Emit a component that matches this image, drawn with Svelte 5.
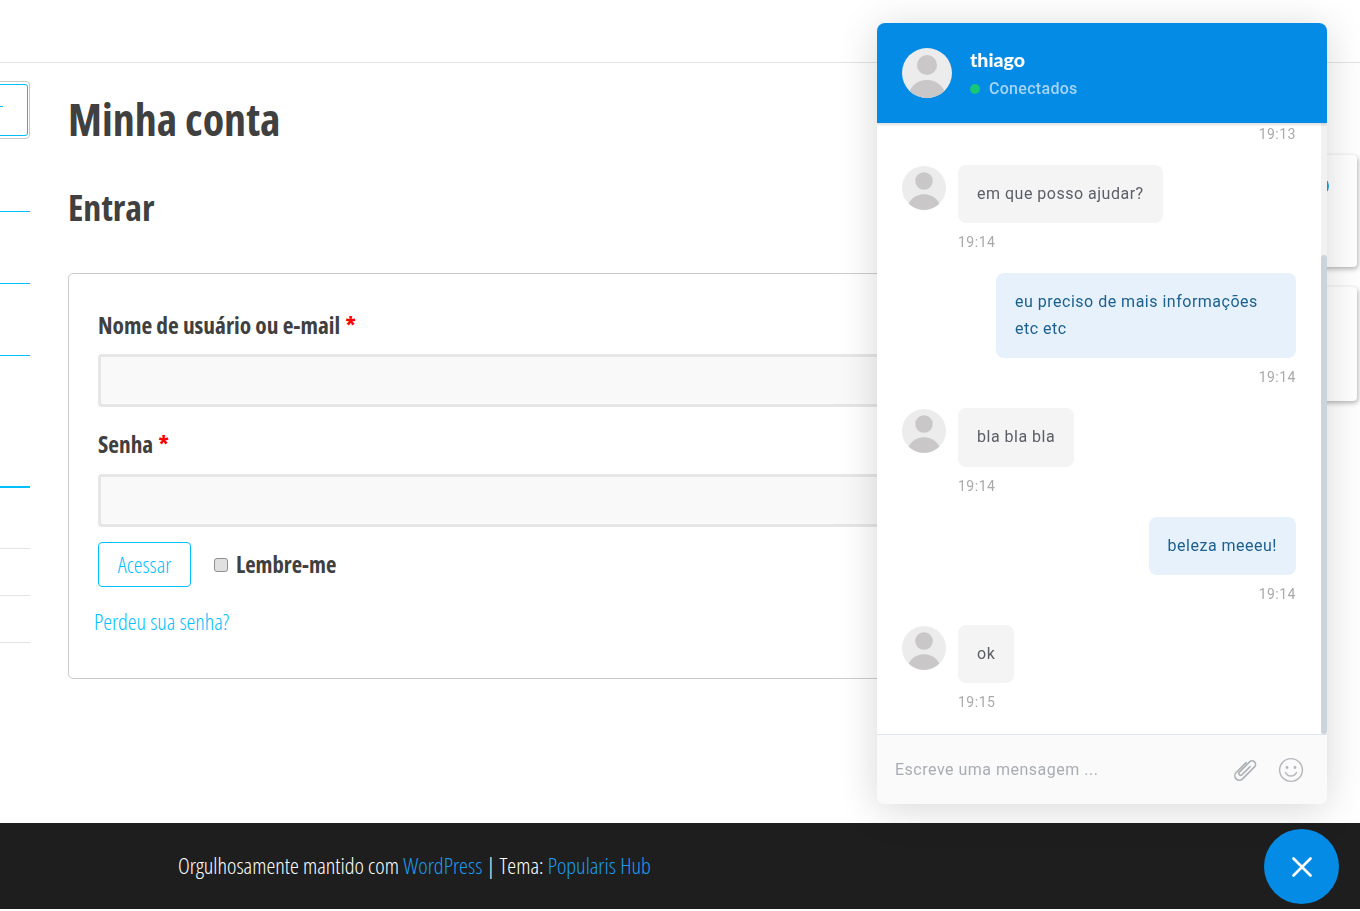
<script>
  const messages = [
    { side: 'in', text: 'em que posso ajudar?', time: '19:14' },
    { side: 'out', text: 'eu preciso de mais informações etc etc', time: '19:14' },
    { side: 'in', text: 'bla bla bla', time: '19:14' },
    { side: 'out', text: 'beleza meeeu!', time: '19:14' },
    { side: 'in', text: 'ok', time: '19:15' }
  ];
</script>

{#snippet avatar(size)}
  <svg class="avatar" width={size} height={size} viewBox="0 0 50 50" aria-hidden="true">
    <defs>
      <clipPath id="round-{size}"><circle cx="25" cy="25" r="25" /></clipPath>
    </defs>
    <g clip-path="url(#round-{size})">
      <rect width="50" height="50" fill="#ececec" />
      <circle cx="25" cy="17" r="10" fill="#c9c7c7" />
      <ellipse cx="25" cy="50" rx="19" ry="18" fill="#c9c7c7" />
    </g>
  </svg>
{/snippet}

<div class="page">
  <header class="topbar"></header>

  <div class="content">
    <aside class="sidebar">
      <div class="search"><div class="search-inner"><span class="tick"></span></div></div>
      <div class="rule blue" style="margin-top:72px"></div>
      <div class="rule blue" style="margin-top:71px"></div>
      <div class="rule blue" style="margin-top:71px"></div>
      <div class="rule blue thick" style="margin-top:130px"></div>
      <div class="rule grey" style="margin-top:60px"></div>
      <div class="rule grey" style="margin-top:46px"></div>
      <div class="rule grey" style="margin-top:46px"></div>
    </aside>

    <main class="main">
      <h1>Minha conta</h1>
      <h2>Entrar</h2>
      <form class="card">
        <label class="field-label" for="user">Nome de usuário ou e-mail <span class="req">*</span></label>
        <input id="user" class="text-input" type="text" />
        <label class="field-label second" for="pass">Senha <span class="req">*</span></label>
        <input id="pass" class="text-input" type="password" />
        <div class="actions">
          <button type="button" class="submit">Acessar</button>
          <label class="remember"><span class="check"></span>Lembre-me</label>
        </div>
        <a class="lost" href="#lost">Perdeu sua senha?</a>
      </form>
    </main>

    <aside class="right">
      <div class="widget first"><span class="blue-dot"></span></div>
      <div class="widget"></div>
    </aside>
  </div>

  <footer class="footer">
    <span>Orgulhosamente mantido com <a href="#wp">WordPress</a> | Tema: <a href="#theme">Popularis Hub</a></span>
  </footer>
</div>

<section class="chat">
  <div class="chat-head">
    {@render avatar(50)}
    <div class="who">
      <div class="name">thiago</div>
      <div class="status"><span class="online"></span>Conectados</div>
    </div>
  </div>

  <div class="chat-body">
    <div class="scrollbar"><div class="thumb"></div></div>
    <div class="time first-time out">19:13</div>
    {#each messages as m}
      <div class="msg {m.side}">
        {#if m.side === 'in'}
          {@render avatar(44)}
        {/if}
        <div class="stack">
          <div class="bubble">{m.text}</div>
          <div class="time">{m.time}</div>
        </div>
      </div>
    {/each}
  </div>

  <div class="chat-foot">
    <span class="placeholder">Escreve uma mensagem ...</span>
    <svg class="clip" width="26" height="26" viewBox="0 0 26 26" fill="none" stroke="#adb0b4" stroke-width="1.6" stroke-linecap="round" stroke-linejoin="round" aria-hidden="true">
      <path transform="rotate(-45 13 13)" d="M19 14.2H7.5a1.85 1.85 0 0 1 0-3.7H22a3.5 3.5 0 0 1 0 7H5a4.5 4.5 0 0 1 0-9H19" />
    </svg>
    <svg class="smile" width="26" height="26" viewBox="0 0 26 26" fill="none" stroke="#b3b6ba" stroke-width="1.4" stroke-linecap="round" aria-hidden="true">
      <circle cx="13" cy="13" r="11.4" />
      <circle cx="9" cy="10.5" r="0.7" fill="#b3b6ba" />
      <circle cx="17" cy="10.5" r="0.7" fill="#b3b6ba" />
      <path d="M7.5 15.5c1.2 2.4 3.2 3.5 5.5 3.5s4.3-1.1 5.5-3.5" />
    </svg>
  </div>
</section>

<button class="fab" aria-label="Fechar">
  <svg width="20" height="20" viewBox="0 0 20 20" stroke="#fff" stroke-width="2.6" stroke-linecap="round" aria-hidden="true">
    <path d="M1.5 1.5l17 17M18.5 1.5l-17 17" />
  </svg>
</button>

<style>
  :global(body) {
    background: #fff;
    overflow: hidden;
  }

  .page {
    font-family: "Open Sans", "Liberation Sans", sans-serif;
    font-stretch: 75%;
    color: #404040;
    width: 1360px;
  }

  .topbar {
    height: 62px;
    border-bottom: 1px solid #e3e3e3;
  }

  .content {
    display: grid;
    grid-template-columns: 30px 1262px 68px;
    height: 760px;
    overflow: hidden;
  }

  .sidebar {
    padding-top: 18px;
  }

  .search {
    height: 58px;
    box-sizing: border-box;
    margin-left: -10px;
    padding: 2px 1px;
    border: 1px solid #c8c8c8;
    border-radius: 4px;
  }

  .search-inner {
    height: 100%;
    box-sizing: border-box;
    border: 1px solid #00bfff;
    border-radius: 3px;
    position: relative;
  }

  .tick {
    position: absolute;
    left: 7px;
    top: 21px;
    width: 3px;
    height: 1px;
    background: #00bfff;
  }

  .rule {
    height: 1px;
  }
  .rule.blue { background: #00bfff; }
  .rule.thick { height: 2px; }
  .rule.grey { background: #e3e3e3; }

  .main {
    padding-left: 38px;
  }

  h1 {
    margin: 25px 0 0;
    font-size: 44px;
    line-height: 62px;
    font-weight: 700;
  }

  h2 {
    margin: 32px 0 0;
    font-size: 36px;
    line-height: 52px;
    font-weight: 700;
  }

  .card {
    box-sizing: border-box;
    margin-top: 39px;
    height: 406px;
    padding: 31px 29px 0;
    border: 1px solid #ccc;
    border-radius: 5px;
    display: flex;
    flex-direction: column;
    align-items: flex-start;
  }

  .field-label {
    font-size: 23.4px;
    line-height: 40px;
    font-weight: 700;
    margin-bottom: 9px;
    color: #404040;
  }

  .field-label.second {
    margin-top: 17px;
    margin-bottom: 10px;
  }

  .req {
    color: #f00;
    margin-left: 1px;
  }

  .text-input {
    box-sizing: border-box;
    width: 100%;
    height: 53px;
    border: 3px solid #e6e6e6;
    border-radius: 4px;
    background: #f9f9f9;
  }

  .actions {
    display: flex;
    align-items: center;
    margin-top: 15px;
  }

  .submit {
    width: 93px;
    height: 45px;
    padding: 0 0 2px;
    background: #fff;
    border: 1px solid #00bfff;
    border-radius: 4px;
    color: #00bfff;
    font-family: inherit;
    font-stretch: 75%;
    font-size: 22px;
    font-weight: 300;
  }

  .remember {
    display: flex;
    align-items: center;
    margin-left: 23px;
    font-size: 22.7px;
    font-weight: 700;
  }

  .check {
    width: 12px;
    height: 12px;
    margin-right: 8px;
    border: 1px solid #8f8f8f;
    border-radius: 3px;
    background: #e0e0e0;
  }

  .lost {
    margin: 15px 0 0 -4px;
    font-size: 22.2px;
    line-height: 40px;
    font-weight: 300;
    color: #00bfff;
    text-decoration: none;
  }

  .right {
    padding: 92px 0 0 8px;
    display: flex;
    flex-direction: column;
    gap: 20px;
  }

  .widget {
    height: 112px;
    width: 57px;
    background: #fff;
    border-radius: 4px;
    box-shadow: 1px 2px 5px rgba(0, 0, 0, 0.3);
    position: relative;
  }

  .widget + .widget {
    height: 114px;
  }

  .blue-dot {
    position: absolute;
    left: 9px;
    top: 21px;
    width: 20px;
    height: 20px;
    border-radius: 50%;
    background: #12a0e6;
  }

  .footer {
    height: 86px;
    box-sizing: border-box;
    padding: 0 0 2px 178px;
    background: #1e1e1e;
    color: #fff;
    font-size: 22.4px;
    font-weight: 300;
    display: flex;
    align-items: center;
  }

  .footer a {
    color: #1b9cf0;
    text-decoration: none;
  }

  .chat {
    position: absolute;
    left: 877px;
    top: 23px;
    width: 450px;
    height: 781px;
    display: flex;
    flex-direction: column;
    background: #fff;
    border-radius: 8px;
    box-shadow: 0 5px 40px rgba(0, 0, 0, 0.16);
    font-family: Roboto, "Liberation Sans", sans-serif;
    overflow: hidden;
    will-change: transform;
  }

  .chat-head {
    height: 100px;
    box-sizing: border-box;
    flex: none;
    padding: 25px;
    display: flex;
    gap: 18px;
    background: #038be5;
    color: #fff;
    box-shadow: 0 2px 2px rgba(0, 0, 0, 0.12);
    position: relative;
    z-index: 1;
  }

  .avatar {
    flex: none;
    display: block;
  }

  .who {
    margin-top: -1px;
  }

  .name {
    font-family: Lato, Roboto, sans-serif;
    font-size: 19.5px;
    font-weight: 900;
    line-height: 26px;
  }

  .status {
    margin-top: 4px;
    display: flex;
    align-items: center;
    font-size: 16px;
    font-weight: 500;
    line-height: 24px;
    letter-spacing: 0.3px;
    color: #a6d4f8;
  }

  .online {
    width: 10px;
    height: 10px;
    border-radius: 50%;
    margin-right: 9px;
    background: #17c77a;
  }

  .chat-body {
    flex: 1;
    position: relative;
    padding: 1px 31px 0 25px;
    overflow: hidden;
    display: flex;
    flex-direction: column;
  }

  .scrollbar {
    position: absolute;
    top: 0;
    bottom: 0;
    right: 0;
    width: 6px;
    background: #f1f1f1;
  }

  .thumb {
    position: absolute;
    top: 132px;
    bottom: 0;
    left: 0;
    right: 0;
    border-radius: 3px;
    background: #cbd3db;
  }

  .time {
    margin-top: 7px;
    font-size: 14px;
    line-height: 24px;
    letter-spacing: 0.5px;
    color: #a9a9a9;
  }

  .time.first-time {
    margin: 0 0 3px;
    text-align: right;
    line-height: 20px;
  }

  .msg {
    display: flex;
    margin-top: 19px;
    gap: 12px;
  }

  .msg.out {
    justify-content: flex-end;
  }

  .time.first-time + .msg {
    margin-top: 18px;
  }

  .msg .avatar {
    margin-top: 1px;
  }

  .stack {
    display: flex;
    flex-direction: column;
  }

  .msg.out .stack {
    align-items: flex-end;
  }

  .bubble {
    padding: 16px 19px;
    font-size: 16px;
    line-height: 26.4px;
    letter-spacing: 0.5px;
    border-radius: 8px;
    background: #f4f4f4;
    color: #5b5e66;
    width: fit-content;
  }

  .msg.out .bubble {
    max-width: 262px;
    background: #e6f1fb;
    color: #1b5f8f;
  }

  .chat-foot {
    height: 70px;
    flex: none;
    box-sizing: border-box;
    border-top: 1px solid #dfe5ee;
    background: #fafafa;
    display: flex;
    align-items: center;
    padding: 0 23px 0 18px;
  }

  .placeholder {
    flex: 1;
    font-size: 16px;
    letter-spacing: 0.5px;
    color: #a9adb3;
  }

  .clip {
    margin-right: 20px;
  }

  .fab {
    position: absolute;
    left: 1264px;
    top: 829px;
    width: 75px;
    height: 75px;
    padding: 0;
    border: none;
    border-radius: 50%;
    background: #038be5;
    display: flex;
    align-items: center;
    justify-content: center;
  }
</style>
